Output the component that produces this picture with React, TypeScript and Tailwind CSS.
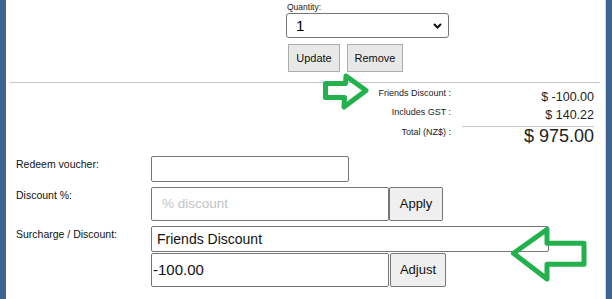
import React from 'react';

const Arrow = ({ points, className }: { points: string; className: string }) => (
  <svg className={className} fill="none" stroke="#22b14c" strokeWidth={5} strokeLinejoin="round">
    <polygon points={points} />
  </svg>
);

const App: React.FC = () => {
  return (
    <div className="flex h-[299px] w-[612px] overflow-hidden bg-white font-['Liberation_Sans',Arial,sans-serif] text-black">
      <div className="w-[6px] shrink-0 bg-[#3d6390]" />

      <div className="relative w-[599px] shrink-0">
        {/* quantity */}
        <div className="ml-[280px] flex w-[164px] flex-col pt-[2px]">
          <div className="ml-[1px] text-[8.5px] leading-[10px] text-[#222]">Quantity:</div>
          <div className="mt-[1px] flex h-[25px] w-[163px] items-center justify-between rounded-[3px] border border-[#767676] bg-white pl-[9px] pr-[6px]">
            <span className="text-[15px] leading-none">1</span>
            <svg width="9" height="6" viewBox="0 0 9 6" fill="none" stroke="#111" strokeWidth={2}>
              <path d="M1 1l3.5 3.5L8 1" />
            </svg>
          </div>
          <div className="mt-[6px] ml-[2px] flex gap-[7px]">
            <button className="h-[28px] w-[52px] border border-[#adadad] bg-[#e8e8e8] text-[11px] text-[#111]">Update</button>
            <button className="h-[28px] w-[56px] border border-[#adadad] bg-[#e8e8e8] text-[11px] text-[#111]">Remove</button>
          </div>
        </div>

        <div className="ml-[4px] mt-[10px] h-[1px] w-[590px] bg-[#c8c8c8]" />

        {/* totals */}
        <div className="flex flex-col text-[#222]">
          <div className="mt-[3px] flex h-[19px] items-start">
            <div className="mt-[1px] w-[445px] text-right text-[9px] leading-[12px]">Friends Discount :</div>
            <div className="ml-[11px] mt-[4px] w-[132px] text-right text-[12.5px] leading-[15px]">$ -100.00</div>
          </div>
          <div className="flex h-[20px] items-start">
            <div className="mt-[1px] w-[445px] text-right text-[9px] leading-[12px]">Includes GST :</div>
            <div className="ml-[11px] mt-[3px] w-[132px] text-right text-[12.5px] leading-[15px]">$ 140.22</div>
          </div>
          <div className="flex items-start">
            <div className="mt-[1px] w-[445px] text-right text-[9px] leading-[12px]">Total (NZ$) :</div>
            <div className="ml-[11px] mt-[1px] w-[132px] border-t border-[#c8c8c8] text-right text-[18px] leading-[18px]">$ 975.00</div>
          </div>
        </div>

        {/* adjustments form */}
        <div className="mt-[11px] flex flex-col text-[10.5px] leading-[12px] text-[#111]">
          <div className="flex">
            <div className="ml-[10px] w-[135px] pt-[2px]">Redeem voucher:</div>
            <div className="h-[26px] w-[198px] rounded-[2px] border border-[#767676]" />
          </div>
          <div className="mt-[5px] flex">
            <div className="ml-[10px] w-[135px] pt-[2px]">Discount %:</div>
            <div className="flex h-[34px] w-[238px] items-center rounded-[2px] border border-[#767676] pl-[10px] text-[13.5px] text-[#c4c4c4]">
              % discount
            </div>
            <button className="h-[34px] w-[54px] rounded-[2px] border border-[#767676] bg-[#efefef] text-[13px] text-[#111]">Apply</button>
          </div>
          <div className="mt-[5px] flex">
            <div className="ml-[10px] w-[135px] pt-[2px]">Surcharge / Discount:</div>
            <div className="flex flex-col">
              <div className="flex h-[26px] w-[398px] items-center rounded-[2px] border border-[#767676] pl-[5px] text-[14px]">
                Friends Discount
              </div>
              <div className="mt-[1px] flex">
                <div className="flex h-[34px] w-[238px] items-center rounded-[2px] border border-[#767676] pl-[1px] text-[15px]">
                  -100.00
                </div>
                <button className="ml-[1px] h-[34px] w-[56px] rounded-[2px] border border-[#767676] bg-[#efefef] text-[13px] text-[#111]">Adjust</button>
              </div>
            </div>
          </div>
        </div>

        <Arrow
          className="absolute left-[312px] top-[70px] h-[42px] w-[54px]"
          points="7.5,13.5 27.5,13.5 28,6 48,20.5 26,37 26.5,27.5 7.5,27.5"
        />
        <Arrow
          className="absolute left-[499px] top-[222px] h-[64px] w-[87px]"
          points="8.5,31.3 42,7.5 42,21.2 79,21.2 79,42.2 42,42.2 42,57"
        />
      </div>

      <div className="w-[1px] shrink-0 bg-[#cfd6df]" />
      <div className="w-[6px] shrink-0 bg-[#3d6390]" />
    </div>
  );
};

export default App;
